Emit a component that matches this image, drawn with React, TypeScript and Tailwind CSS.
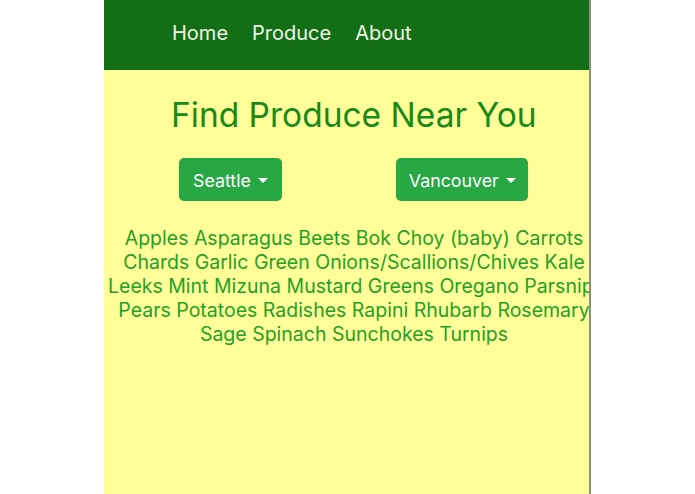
const lines = [
  "Apples Asparagus Beets Bok Choy (baby) Carrots",
  "Chards Garlic Green Onions/Scallions/Chives Kale",
  "Leeks Mint Mizuna Mustard Greens Oregano Parsnips",
  "Pears Potatoes Radishes Rapini Rhubarb Rosemary",
  "Sage Spinach Sunchokes Turnips",
];

function CityButton({ label, className }: { label: string; className: string }) {
  return (
    <button
      className={`flex items-center gap-[7px] h-[43px] pt-[3px] rounded-[5px] bg-[#28a745] text-white text-[17.8px] ${className}`}
    >
      {label}
      <span className="inline-block w-0 h-0 border-x-[5px] border-x-transparent border-t-[5px] border-t-white mb-[2px]" />
    </button>
  );
}

export default function App() {
  return (
    <div className="w-[695px] h-[494px] bg-white" style={{ fontFamily: 'Inter, "Liberation Sans", Arial, sans-serif' }}>
      <div className="ml-[104px] w-[487px] h-[494px] bg-[#ffff99] border-r-2 border-[#8c8c80] overflow-hidden">
        <nav className="h-[70px] bg-[#136f15] flex items-center gap-[24px] pl-[68px] pb-[4px] text-[20px] text-[#f2f2e8]">
          <a>Home</a>
          <a>Produce</a>
          <a>About</a>
        </nav>
        <h1 className="mt-[25px] pl-[67px] text-[33.5px] leading-[40px] text-[#178a17]">Find Produce Near You</h1>
        <div className="mt-[23px] flex">
          <CityButton label="Seattle" className="ml-[75px] px-[14px]" />
          <CityButton label="Vancouver" className="ml-[114px] pl-[13px] pr-[12px]" />
        </div>
        <div className="mt-[25px] pl-[4px] w-[496px] text-center text-[19.5px] leading-[24px] text-[#25a025]">
          {lines.map((l) => (
            <div key={l} className="whitespace-nowrap">{l}</div>
          ))}
        </div>
      </div>
    </div>
  );
}
